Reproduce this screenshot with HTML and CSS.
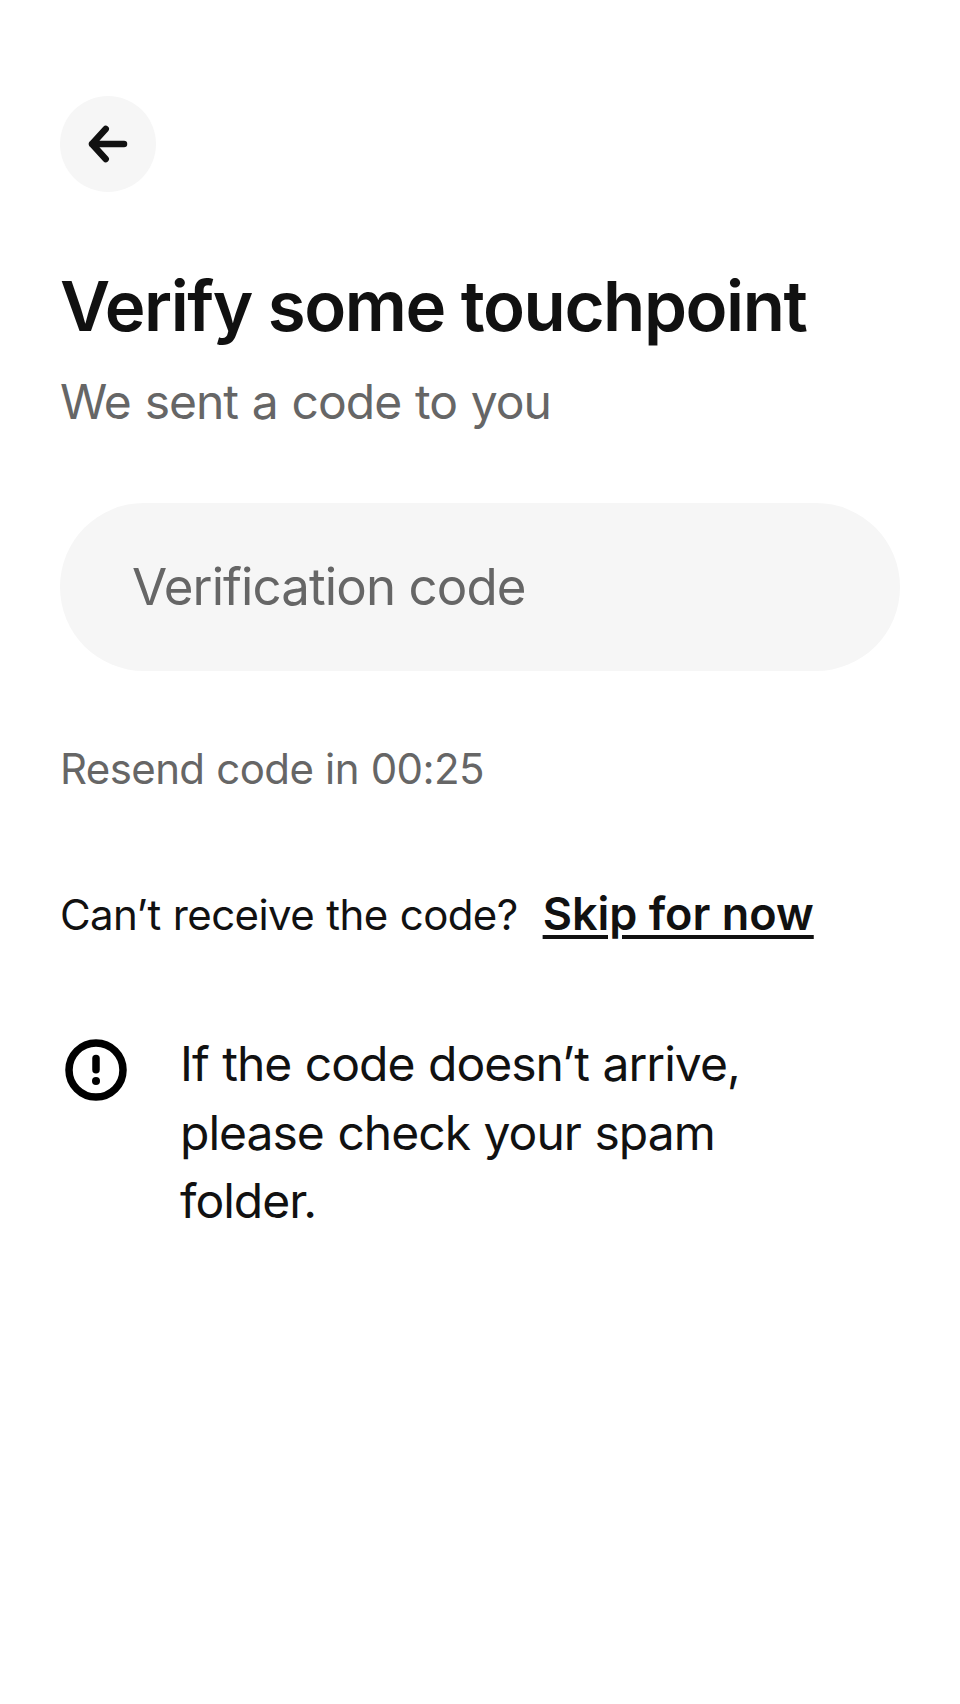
FILE: index.html
```html
<!DOCTYPE html>
<html lang="en">
<head>
<meta charset="utf-8">
<title>Verify some touchpoint</title>
<link rel="stylesheet" href="styles.css">
</head>
<body>
<main class="screen">
  <button class="back" aria-label="Back">
    <svg width="48" height="48" viewBox="0 0 48 48" fill="none" stroke="#111" stroke-width="6.5" stroke-linecap="round" stroke-linejoin="round"><path d="M40 24H8M21.700 9L8 24l13.700 15"/></svg>
  </button>
  <h1 class="title">Verify some touchpoint</h1>
  <p class="subtitle">We sent a code to you</p>
  <input class="code" placeholder="Verification code" aria-label="Verification code">
  <p class="resend">Resend code in 00:25</p>
  <div class="help"><span class="question">Can’t receive the code?</span><a class="skip" href="#">Skip for now</a></div>
  <div class="notice">
    <svg class="notice-icon" width="72" height="72" viewBox="0 0 72 72" fill="none"><circle cx="36" cy="36" r="27" stroke="#000" stroke-width="7.5"/><path d="M36 24.600v11.200" stroke="#000" stroke-width="7.500" stroke-linecap="round"/><circle cx="36" cy="47" r="4" fill="#000"/></svg>
    <p class="notice-text">If the code doesn’t arrive, please check your spam folder.</p>
  </div>
</main>
</body>
</html>
```

FILE: styles.css
```css
* { box-sizing: border-box; }
body { margin: 0; background: #fff; color: #111; font-family: Inter, sans-serif; }
.screen { display: flex; flex-direction: column; min-height: 1704px; padding: 96px 60px; }
.back { display: flex; align-items: center; justify-content: center; width: 96px; height: 96px; padding: 0; border: 0; border-radius: 50%; background: #f6f6f6; }
.title { margin: 71px 0 0; font-size: 69px; line-height: 86px; font-weight: 600; letter-spacing: -1.45px; word-spacing: 0; white-space: nowrap; }
.subtitle { margin: 20px 0 0; font-size: 48px; line-height: 66px; letter-spacing: -1px; word-spacing: 1.3px; color: #666; }
.code { width: 100%; height: 168px; margin: 68px 0 0; padding: 0 72px 2px; border: 0; border-radius: 84px; background: #f6f6f6; font: 400 51px Inter, sans-serif; letter-spacing: -0.9px; outline: 0; }
.code::placeholder { color: #666; opacity: 1; }
.resend { margin: 68px 0 0; font-size: 42px; line-height: 60px; letter-spacing: -0.6px; word-spacing: 0.6px; color: #666; }
.help { display: flex; align-items: baseline; gap: 25px; margin-top: 80px; font-size: 42px; line-height: 70px; white-space: nowrap; }
.question { letter-spacing: -0.6px; word-spacing: 1px; }
.skip { color: #111; font-size: 45px; font-weight: 600; text-decoration-thickness: 4px; text-underline-offset: 5px; }
.notice { display: flex; gap: 48px; margin-top: 79px; }
.notice-icon { flex: none; margin-top: 5px; }
.notice-text { width: 600px; margin: 0; padding-top: 1px; font-size: 48px; line-height: 68.6px; letter-spacing: -0.98px; word-spacing: 1px; }
```
